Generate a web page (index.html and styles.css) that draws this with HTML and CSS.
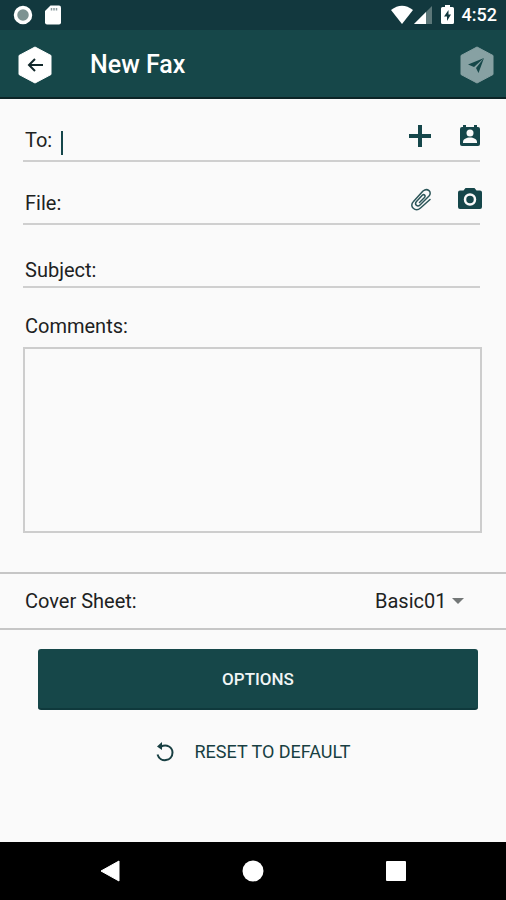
FILE: index.html
```html
<!DOCTYPE html>
<html lang="en">
<head>
<meta charset="utf-8">
<meta name="viewport" content="width=device-width, initial-scale=1">
<title>New Fax</title>
<link rel="stylesheet" href="styles.css">
</head>
<body>
<div class="screen">
  <div class="status">
    <svg width="20" height="20" viewBox="0 0 20 20" aria-hidden="true"><circle cx="10" cy="10" r="7.500" fill="#7d9392" stroke="#fff" stroke-width="3.500"/></svg>
    <svg class="sd" width="18" height="20" viewBox="0 0 18 20" aria-hidden="true"><path d="M6.500.5H15q2 0 2 2v15q0 2-2 2H3q-2 0-2-2V6z" fill="#fff"/><path d="M7.500 3v2.500M10 3v2.500M12.500 3v2.500" stroke="#8a9a9c" stroke-width="1.500"/></svg>
    <span class="spacer"></span>
    <svg width="22" height="20" viewBox="0 0 22 20" aria-hidden="true"><path d="M0 5Q11-3.500 22 5L11 19z" fill="#fff"/></svg>
    <svg class="signal" width="18" height="20" viewBox="0 0 18 20" aria-hidden="true"><path d="M18 1v18H0z" fill="#5c7779"/><path d="M12 7v12H0z" fill="#fff"/></svg>
    <svg class="battery" width="13" height="20" viewBox="0 0 13 20" aria-hidden="true"><path d="M4 0h5v2h2.500q1.500 0 1.500 1.500v14q0 1.500-1.500 1.500h-10Q0 19 0 17.500v-14Q0 2 1.500 2H4z" fill="#fff"/><path d="M7.500 5 3 11.500h3V16l4-6.500H7.500z" fill="#12383e"/></svg>
    <time class="clock">4:52</time>
  </div>
  <header class="appbar">
    <button class="hex" type="button" aria-label="Back">
      <svg width="34" height="38" viewBox="0 0 34 38"><path d="M17 1 33 9.500v19L17 37 1 28.500v-19z" fill="#fff" stroke="#fff" stroke-linejoin="round"/><path d="M25 19H11M17 13l-6 6 6 6" fill="none" stroke="#12282b" stroke-width="2"/></svg>
    </button>
    <h1>New Fax</h1>
    <button class="hex" type="button" aria-label="Send">
      <svg width="34" height="38" viewBox="0 0 34 38"><path d="M17 1 33 9.500v19L17 37 1 28.500v-19z" fill="#87a1a3" stroke="#87a1a3" stroke-linejoin="round"/><path d="M24 12 8 18.500l6 2.500zM24 12l-8 10 2.500 5z" fill="#164749"/></svg>
    </button>
  </header>
  <main>
    <form>
      <div class="fields">
        <div class="row">
          <label for="to">To:</label>
          <span class="caret"></span>
          <input id="to" type="text">
          <button type="button" aria-label="Add recipient"><svg width="24" height="24" viewBox="0 0 24 24"><path d="M12 1v22M1 12h22" stroke="#15464a" stroke-width="4"/></svg></button>
          <button type="button" aria-label="Choose contact"><svg width="26" height="24" viewBox="0 0 26 24"><path d="M6 1h3v2h8V1h3v2h1q2 0 2 2v15q0 2-2 2H5q-2 0-2-2V5q0-2 2-2h1z" fill="#15464a"/><circle cx="13" cy="9" r="3.500" fill="#fafafa"/><path d="M6 19v-1c0-6 14-6 14 0v1z" fill="#fafafa"/></svg></button>
        </div>
        <div class="row">
          <label for="file">File:</label>
          <input id="file" type="text">
          <button type="button" aria-label="Attach file"><svg width="24" height="24" viewBox="0 0 24 24"><path d="M22 12.500 12.500 21c-5 4.500-12-1.500-7-6.500L15 4c4.500-3.500 9.500 1 6 5l-9 9c-2.500 2.500-6-.5-3.500-3.500L14.500 8c1.500-1 3.500.5 2 2.500l-5 5" fill="none" stroke="#2b5558" stroke-width="1.500" stroke-linecap="round" stroke-linejoin="round"/></svg></button>
          <button type="button" aria-label="Take photo"><svg width="26" height="24" viewBox="0 0 26 24"><path d="M8.500 1h9l2 2.500H23q2 0 2 2V20q0 2-2 2H3q-2 0-2-2V5.500q0-2 2-2h3.500z" fill="#15464a"/><circle cx="13" cy="12.500" r="5" fill="#15464a" stroke="#fafafa" stroke-width="2.500"/></svg></button>
        </div>
        <div class="row low">
          <label for="subject">Subject:</label>
          <input id="subject" type="text">
        </div>
        <label class="comments-label" for="comments">Comments:</label>
        <textarea id="comments"></textarea>
      </div>
      <div class="cover">
        <label for="cover">Cover Sheet:</label>
        <span class="picker">
          <select id="cover"><option>Basic01</option></select>
          <svg width="12" height="6" viewBox="0 0 12 6" aria-hidden="true"><path d="M0 0h12L6 6z" fill="#737777"/></svg>
        </span>
      </div>
      <div class="actions">
        <button class="options" type="button">OPTIONS</button>
        <button class="reset" type="reset">
          <svg width="20" height="20" viewBox="0 0 20 20" aria-hidden="true"><path d="M6 4.500C12 1.500 17.500 5.500 17.500 10.500C17.500 19.500 5 21 2.500 12.500" fill="none" stroke="#183f42" stroke-width="2"/><path d="M7 0v8L2 4.500z" fill="#183f42"/></svg>
          RESET TO DEFAULT
        </button>
      </div>
    </form>
  </main>
  <nav class="nav" aria-label="System">
    <button type="button" aria-label="Back"><svg width="22" height="22" viewBox="0 0 22 22"><path d="M20 1v20L2 11z" fill="#fff" stroke="#fff" stroke-linejoin="round"/></svg></button>
    <button type="button" aria-label="Home"><svg width="22" height="22" viewBox="0 0 22 22"><circle cx="11" cy="11" r="10.500" fill="#fff"/></svg></button>
    <button type="button" aria-label="Recent apps"><svg width="22" height="22" viewBox="0 0 22 22"><rect x="1" y="1" width="20" height="20" rx="1" fill="#fff"/></svg></button>
  </nav>
</div>
</body>
</html>
```
FILE: styles.css
```css
* { box-sizing: border-box; }
body {
  margin: 0;
  background: #fafafa;
  color: #1d2222;
  font: 20px/24px Roboto, sans-serif;
}
button, input, select, textarea { font: inherit; color: inherit; }
button { border: 0; padding: 0; background: none; cursor: pointer; }
svg { display: block; flex: none; }

.screen { display: flex; flex-direction: column; min-height: 100vh; }
.status {
  display: flex;
  align-items: center;
  height: 30px;
  padding: 0 9px 0 13px;
  background: #12383e;
  color: #fff;
}
.sd { margin-left: 11px; }
.spacer { flex: 1; }
.signal { margin-left: 1px; }
.battery { margin-left: 9px; }
.clock { margin-left: 8px; font-size: 18px; font-weight: 500; }

.appbar {
  display: flex;
  align-items: center;
  height: 69px;
  padding: 2px 12px 0 18px;
  background: #164749;
  border-bottom: 2px solid #0c2426;
  color: #fff;
}
.appbar h1 {
  flex: 1;
  margin: 0 0 0 38px;
  font-size: 25px;
  font-weight: 500;
  line-height: 32px;
}

main { flex: 1; }
.fields { padding: 0 24px 0 23px; }
.row {
  display: flex;
  align-items: flex-end;
  height: 63px;
  margin-right: 2px;
  padding: 0 0 8px 2px;
  border-bottom: 2px solid #cfcfcf;
}
.row.low { padding-bottom: 4px; }
.row input {
  flex: 1;
  min-width: 0;
  height: 24px;
  padding: 0 0 0 8px;
  border: 0;
  outline: 0;
  background: none;
}
.row button { margin: 0 0 4px 25px; }
.row button:last-child { margin-right: -3px; }
.caret { width: 2px; height: 24px; margin: 0 0 -3px 9px; background: #15464a; }
.comments-label { display: block; padding: 26px 2px 9px; }
textarea {
  display: block;
  width: 100%;
  height: 186px;
  padding: 8px;
  border: 2px solid #cdcdcd;
  background: none;
  outline: 0;
  resize: none;
}

.cover {
  display: flex;
  align-items: center;
  justify-content: space-between;
  height: 58px;
  margin-top: 39px;
  padding: 0 42px 0 25px;
  border: solid #c6c6c6;
  border-width: 2px 0;
}
.picker { display: flex; align-items: center; gap: 5px; }
.picker select { appearance: none; border: 0; padding: 0; background: none; outline: 0; }

.actions { display: flex; flex-direction: column; align-items: center; padding: 19px 28px 0 38px; }
.options {
  width: 100%;
  height: 61px;
  border-radius: 3px;
  border-bottom: 2px solid #0f393c;
  background: #164749;
  color: #f1f5f5;
  font-size: 17px;
  font-weight: 500;
}
.reset {
  display: flex;
  align-items: center;
  gap: 19px;
  margin: 30px 10px 0 0;
  font-size: 18px;
  color: #183f42;
}

.nav {
  display: flex;
  align-items: center;
  justify-content: center;
  gap: 121px;
  height: 58px;
  background: #000;
}
```
